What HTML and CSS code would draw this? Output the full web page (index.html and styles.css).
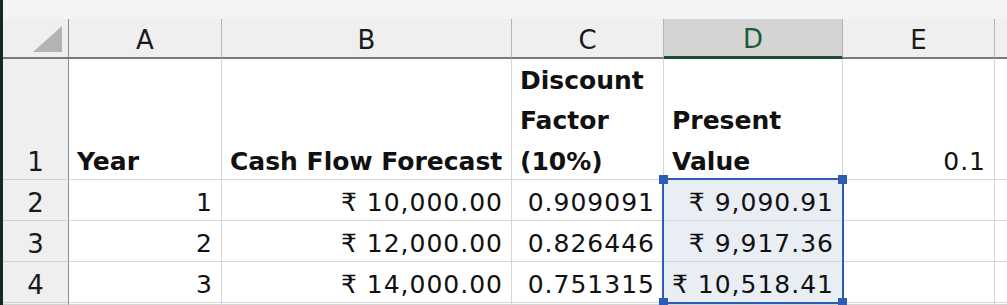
FILE: index.html
```html
<!DOCTYPE html>
<html lang="en">
<head>
<meta charset="utf-8">
<title>Present Value</title>
<link rel="stylesheet" href="styles.css">
</head>
<body>
<div class="app">
  <div class="topstrip"></div>
  <div class="sheet">
    <div class="corner"><svg width="29" height="26" viewBox="0 0 29 26"><polygon points="29,0 29,26 0,26" fill="#b3b3b3"/></svg></div>
    <div class="colhdr">A</div>
    <div class="colhdr">B</div>
    <div class="colhdr">C</div>
    <div class="colhdr active">D</div>
    <div class="colhdr">E</div>
    <div class="colhdr"></div>

    <div class="rowhdr"><span class="t">1</span></div>
    <div class="cell b"><span class="t">Year</span></div>
    <div class="cell b"><span class="t">Cash Flow Forecast</span></div>
    <div class="cell b"><span class="t">Discount<br>Factor<br>(10%)</span></div>
    <div class="cell b"><span class="t">Present<br>Value</span></div>
    <div class="cell r"><span class="t">0.1</span></div>
    <div class="cell"></div>

    <div class="rowhdr"><span class="t">2</span></div>
    <div class="cell r"><span class="t">1</span></div>
    <div class="cell r"><span class="t">₹ 10,000.00</span></div>
    <div class="cell r"><span class="t">0.909091</span></div>
    <div class="cell r sel"><span class="t">₹ 9,090.91</span></div>
    <div class="cell"></div>
    <div class="cell"></div>

    <div class="rowhdr"><span class="t">3</span></div>
    <div class="cell r"><span class="t">2</span></div>
    <div class="cell r"><span class="t">₹ 12,000.00</span></div>
    <div class="cell r"><span class="t">0.826446</span></div>
    <div class="cell r sel"><span class="t">₹ 9,917.36</span></div>
    <div class="cell"></div>
    <div class="cell"></div>

    <div class="rowhdr"><span class="t">4</span></div>
    <div class="cell r"><span class="t">3</span></div>
    <div class="cell r"><span class="t">₹ 14,000.00</span></div>
    <div class="cell r"><span class="t">0.751315</span></div>
    <div class="cell r sel"><span class="t">₹ 10,518.41</span></div>
    <div class="cell"></div>
    <div class="cell"></div>

    <div class="rowhdr"></div>
    <div class="cell"></div>
    <div class="cell"></div>
    <div class="cell"></div>
    <div class="cell"></div>
    <div class="cell"></div>
    <div class="cell"></div>

    <div class="selection">
      <span class="handle tl"></span>
      <span class="handle tr"></span>
      <span class="handle bl"></span>
      <span class="handle br"></span>
    </div>
  </div>
</div>
</body>
</html>
```

FILE: styles.css
```css
* { box-sizing: border-box; }
html, body { margin: 0; padding: 0; background: #ffffff; }
body { width: 1007px; height: 305px; overflow: hidden; }

.app {
  border-left: 3px solid #0f2c1c;
  font-family: "DejaVu Sans", sans-serif;
  color: #111111;
  height: 305px;
  display: flex;
  flex-direction: column;
}

.topstrip {
  height: 19px;
  flex: none;
  background: #f4f4f4;
}

.sheet {
  position: relative;
  flex: 1;
  display: grid;
  grid-template-columns: 66px 153px 290px 152px 179px 152px 1fr;
  grid-template-rows: 40px 121px 41px 41px 41px 1fr;
}

.corner {
  background: #efefef;
  border-right: 1px solid #8c8c8c;
  border-bottom: 2px solid #7a7a7a;
  display: flex;
  justify-content: flex-end;
  align-items: flex-end;
  padding: 0 6px 5px 0;
}

.colhdr {
  background: #efefef;
  border-right: 1px solid #b4b4b4;
  border-bottom: 2px solid #7a7a7a;
  display: flex;
  align-items: center;
  justify-content: center;
  font-size: 26px;
  padding-top: 3px;
  color: #1a1a1a;
}
.colhdr.active {
  background: #d4d4d4;
  border-bottom: 3px solid #1d4d2e;
  color: #1d5a37;
}

.rowhdr {
  background: #efefef;
  border-right: 1px solid #8c8c8c;
  border-bottom: 1px solid #d2d2d2;
  display: flex;
  justify-content: center;
  align-items: flex-end;
  font-size: 26px;
  line-height: 40px;
  color: #1a1a1a;
}

.cell {
  border-right: 1px solid #d6d6d6;
  border-bottom: 1px solid #d6d6d6;
  display: flex;
  flex-direction: column;
  justify-content: flex-end;
  padding: 0 8px;
  font-size: 25px;
  line-height: 40.5px;
  letter-spacing: 1px;
  white-space: nowrap;
}
.t { display: block; margin-bottom: -3px; }
.cell.b { font-weight: bold; letter-spacing: 0; }
.cell.r { align-items: flex-end; text-align: right; }
.cell.sel { background: #e9edf4; }

.selection {
  position: absolute;
  grid-column: 5 / 6;
  grid-row: 3 / 6;
  top: -2px;
  left: -2px;
  right: -1px;
  bottom: -1px;
  border: 2px solid #2b5db5;
  pointer-events: none;
}
.handle {
  position: absolute;
  width: 9px;
  height: 9px;
  background: #2b5db5;
}
.handle.tl { top: -5px; left: -5px; }
.handle.tr { top: -5px; right: -5px; }
.handle.bl { bottom: -5px; left: -5px; }
.handle.br { bottom: -5px; right: -5px; }
```
